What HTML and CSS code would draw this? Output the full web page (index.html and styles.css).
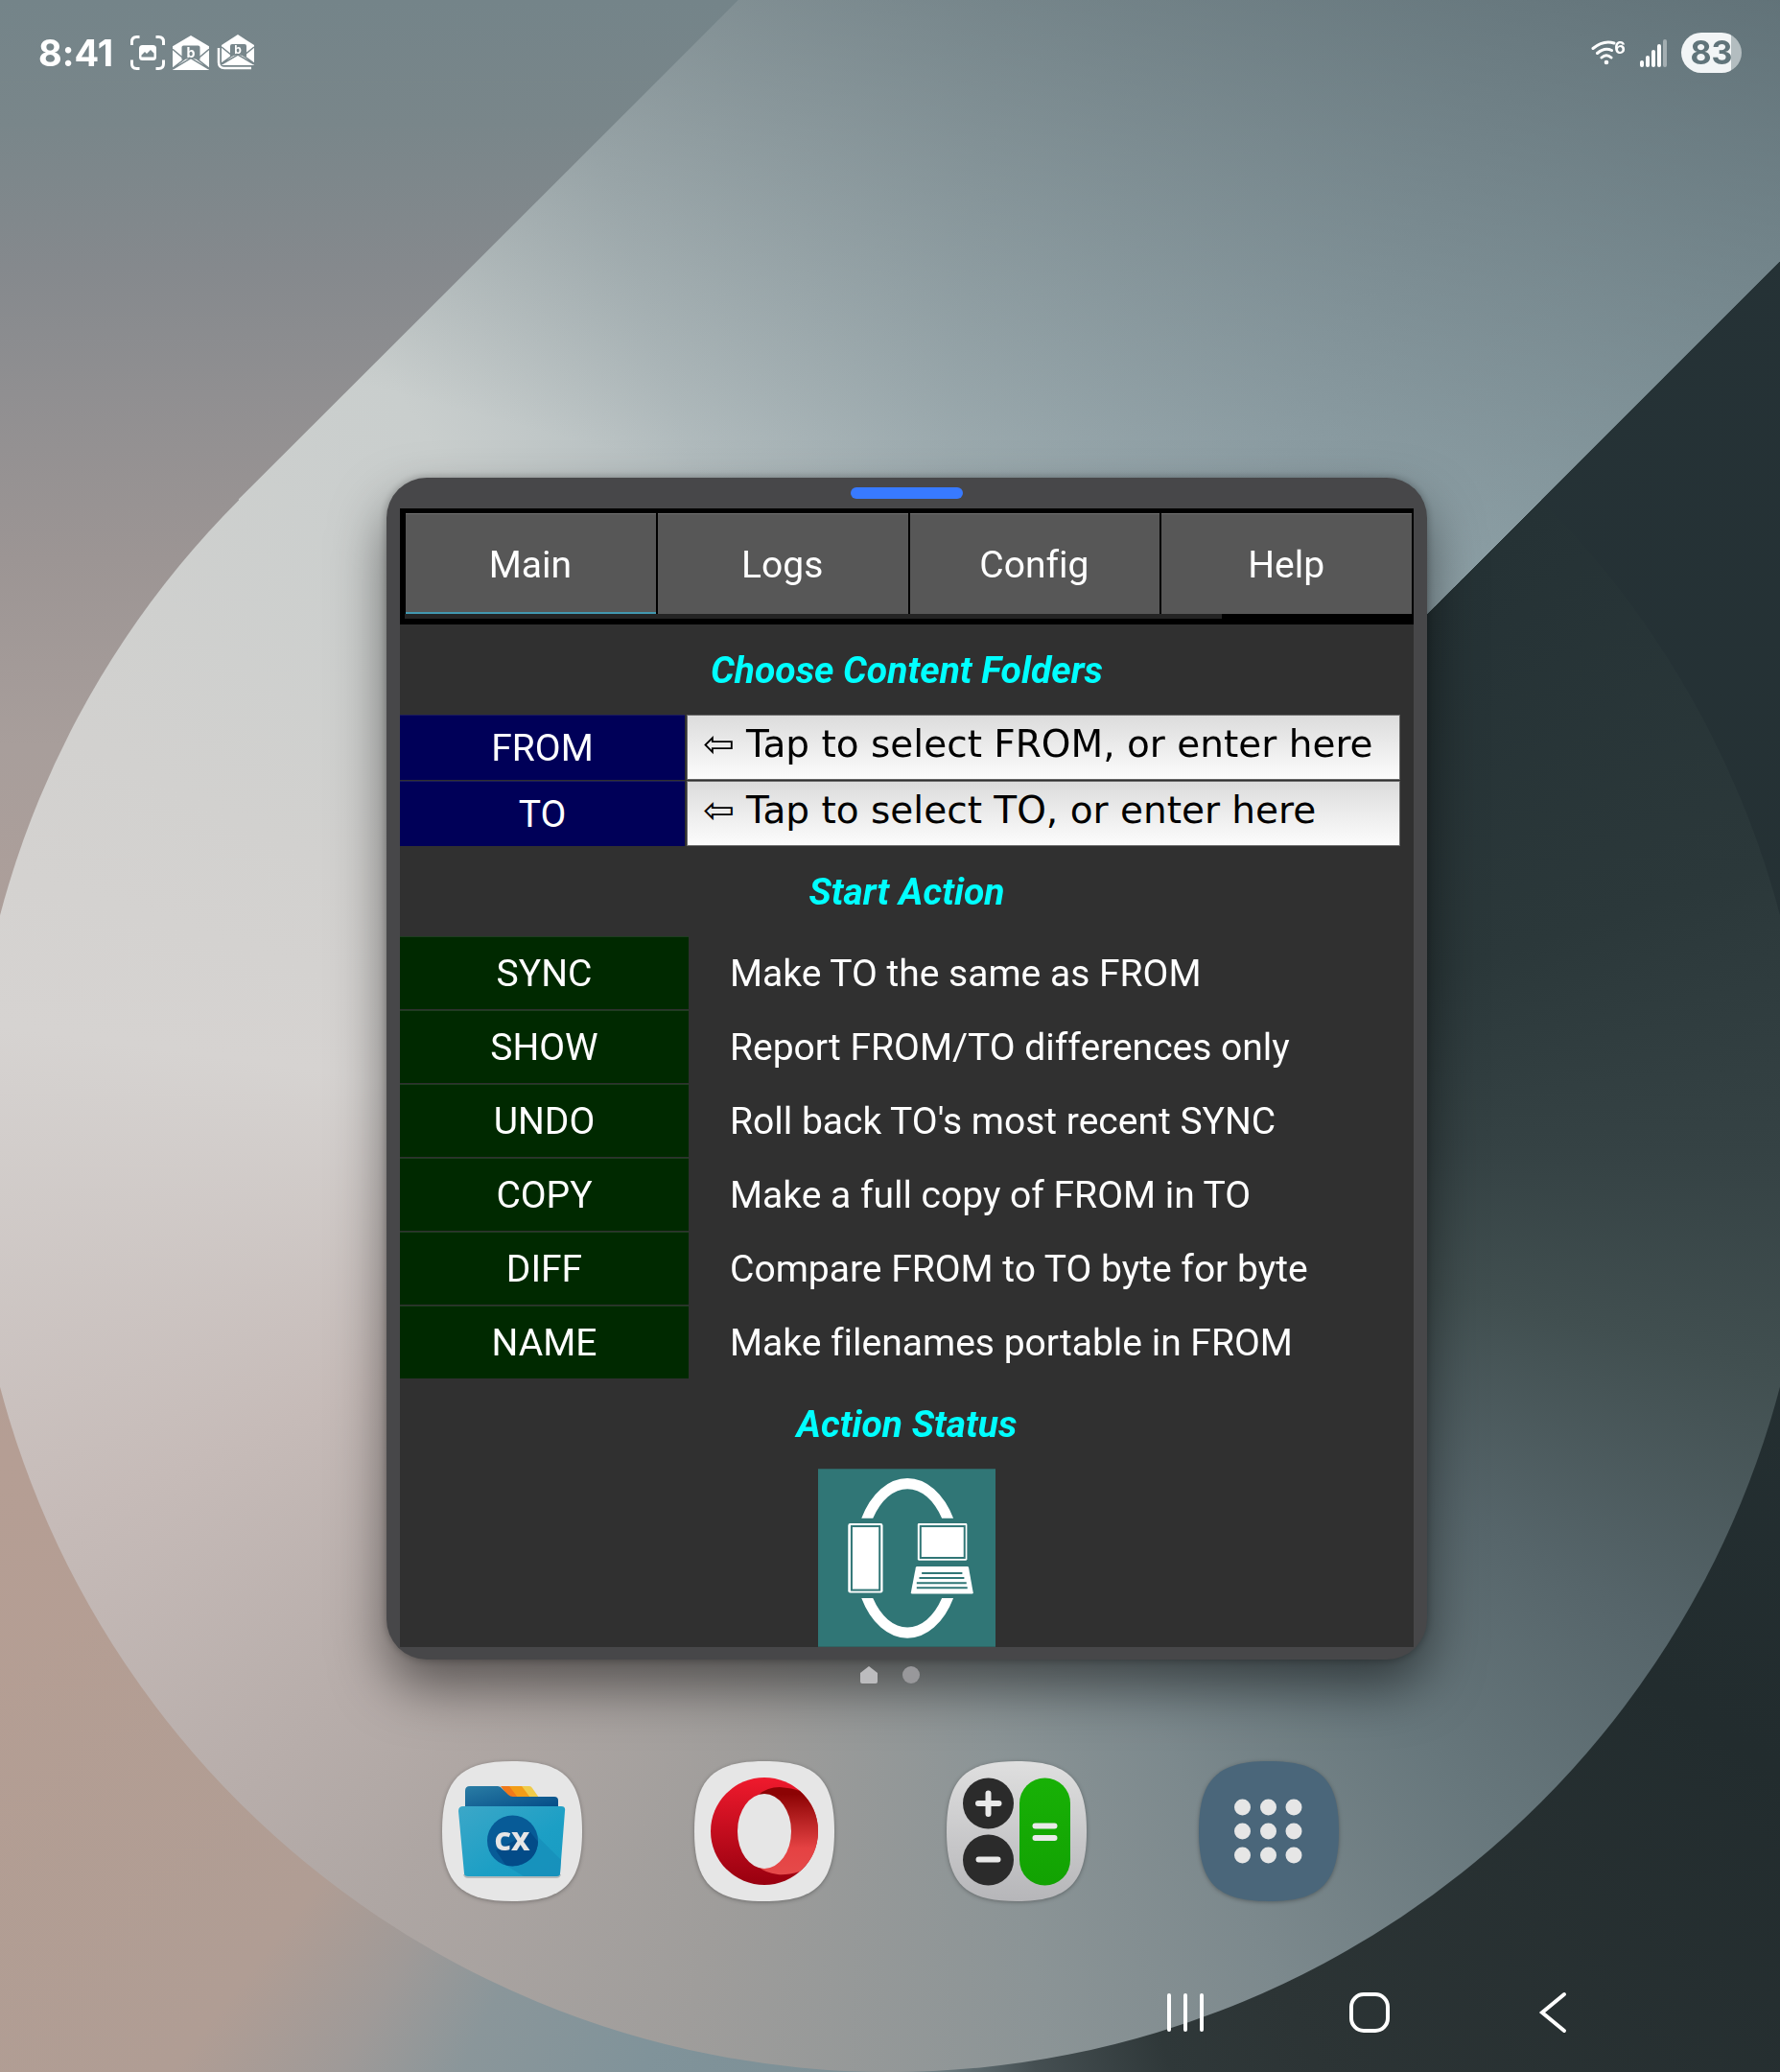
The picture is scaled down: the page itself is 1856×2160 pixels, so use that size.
FILE: index.html
```html
<!DOCTYPE html>
<html lang="en">
<head>
<meta charset="utf-8">
<meta name="viewport" content="width=device-width, initial-scale=1">
<title>Content sync</title>
<link rel="stylesheet" href="styles.css">
</head>
<body>
<div class="wallpaper" aria-hidden="true">
  <div class="disc"></div>
  <div class="beam"></div>
</div>
<div class="screen">
  <header class="status">
    <div class="status-group">
      <span class="clock">8:41</span>
      <span class="notices">
        <svg width="36" height="36" viewBox="0 0 36 36" fill="none"><path d="M1.500 10V6.500Q1.500 1.500 6.500 1.500H9.500M26.500 1.500H29.500Q34.500 1.500 34.500 6.500V10M34.500 25.500V29.500Q34.500 34.500 29.500 34.500H26.500M9.500 34.500H6.500Q1.500 34.500 1.500 29.500V25.500" stroke="#fff" stroke-width="3"/><rect x="9" y="10" width="18" height="16" rx="3.500" fill="#fff"/><path d="M11.500 22.500V20.500L15 17L17 19L21 15L24.500 18.500V22.500Z" fill="#78878c"/></svg>
        <svg width="38" height="38" viewBox="0 0 40 40"><path d="M20 1L40 13V39H0V13Z" fill="#fff"/><path d="M10 14Q10 12 12 12H28Q30 12 30 14V28L20 26L10 28Z" fill="#78878c"/><path d="M20 26L40 39H0Z" fill="#fff"/><path d="M0 16L13 27L0 37M40 16L27 27L40 37M0 38L20 26L40 38" stroke="#78878c" stroke-width="1.500" fill="none"/><text x="20" y="25" class="mail-mark">b</text></svg>
        <svg width="40" height="38" viewBox="0 0 40 38"><path d="M2 14V29Q2 35 8 35H36" stroke="#fff" stroke-width="2.500" fill="none"/><path d="M22 0L39 11V32H5V11Z" fill="#fff"/><path d="M14 12Q14 10 16 10H29Q31 10 31 12V23L22 21L14 23Z" fill="#78878c"/><path d="M22 21L39 32H5Z" fill="#fff"/><path d="M5 13L16 22L5 30M39 13L28 22L39 30M5 31L22 21L39 31" stroke="#78878c" stroke-width="1.500" fill="none"/><text x="22" y="20" class="mail-mark small">b</text></svg>
      </span>
    </div>
    <div class="status-group right">
      <svg width="36" height="30" viewBox="0 0 36 30" fill="none"><path d="M2 10.500Q13 1.500 24 5M6.500 15.500Q14 9 21.500 12.500M11 20Q16 15.500 21 20" stroke="#fff" stroke-width="3" stroke-linecap="round"/><circle cx="16" cy="25" r="2.300" fill="#fff"/><text x="30" y="16" class="wifi-mark">6</text></svg>
      <svg width="28" height="30" viewBox="0 0 28 30" fill="#fff"><rect y="23" width="4" height="7" rx="2"/><rect x="6" y="18" width="4" height="12" rx="2"/><rect x="12" y="12" width="4" height="18" rx="2"/><rect x="18" y="6" width="4" height="24" rx="2"/><rect x="24" y="1" width="4" height="29" rx="2" opacity=".4"/></svg>
      <span class="battery">83</span>
    </div>
  </header>

  <main class="desktop">
    <section class="window">
      <div class="handle"></div>
      <div class="app">
        <nav class="tabs">
          <button class="tab active">Main</button>
          <button class="tab">Logs</button>
          <button class="tab">Config</button>
          <button class="tab">Help</button>
        </nav>
        <div class="track"><div class="thumb"></div></div>
        <h2 class="title">Choose Content Folders</h2>
        <div class="folders">
          <button class="folder" id="from">FROM</button>
          <input class="path" aria-labelledby="from" value="⇦ Tap to select FROM, or enter here">
          <button class="folder" id="to">TO</button>
          <input class="path" aria-labelledby="to" value="⇦ Tap to select TO, or enter here">
        </div>
        <h2 class="title">Start Action</h2>
        <div class="actions">
          <button class="action">SYNC</button><span class="hint">Make TO the same as FROM</span>
          <button class="action">SHOW</button><span class="hint">Report FROM/TO differences only</span>
          <button class="action">UNDO</button><span class="hint">Roll back TO's most recent SYNC</span>
          <button class="action">COPY</button><span class="hint">Make a full copy of FROM in TO</span>
          <button class="action">DIFF</button><span class="hint">Compare FROM to TO byte for byte</span>
          <button class="action">NAME</button><span class="hint">Make filenames portable in FROM</span>
        </div>
        <h2 class="title">Action Status</h2>
        <svg class="logo" viewBox="0 0 556 558">
          <path fill="#307676" d="M0 0H556V558H0Z"/>
          <g fill="#fff">
            <path d="M136 155A166 250 0 0 1 424 155H388A132 216 0 0 0 172 155ZM136 405A166 250 0 0 0 424 405H388A132 216 0 0 1 172 405Z"/>
            <rect x="94" y="171" width="109" height="218" rx="7"/>
            <rect x="312" y="171" width="155" height="116" rx="4"/>
            <path d="M310 306H468Q471 306 472 310L486 388Q486 392 482 392H295Q291 392 291 388L306 310Q307 306 310 306Z"/>
          </g>
          <g fill="none" stroke="#307676" stroke-width="6">
            <rect x="105" y="180" width="88" height="200"/>
            <rect x="321" y="180" width="138" height="99"/>
            <path d="M325 327H452M317 342H458M309 358H465M309 373H468"/>
          </g>
        </svg>
      </div>
    </section>
    <div class="pages">
      <svg width="18" height="18" viewBox="0 0 18 18"><path d="M9 0L18 7V16Q18 18 16 18H2Q0 18 0 16V7Z" fill="#bcbcbe"/></svg>
      <svg width="18" height="18" viewBox="0 0 18 18"><circle cx="9" cy="9" r="9" fill="#98989b"/></svg>
    </div>
  </main>

  <footer class="bottom">
    <div class="dock">
      <button class="launcher" aria-label="File explorer">
        <svg viewBox="0 0 146 146">
          <defs>
            <linearGradient id="folder" x1="0" y1="0" x2="1" y2="1"><stop stop-color="#3ca7c8"/><stop offset=".6" stop-color="#1c9fc5"/><stop offset="1" stop-color="#189bc2"/></linearGradient>
            <linearGradient id="back" x1="0" y1="0" x2="1" y2="1"><stop stop-color="#2a7da5"/><stop offset="1" stop-color="#024a86"/></linearGradient>
          </defs>
          <path fill="#e6e6e6" d="M73 0C127 0 146 19 146 73S127 146 73 146 0 127 0 73 19 0 73 0Z"/>
          <path fill="#f0791a" d="M61 26H73L83 38H70Z"/><path fill="#f29d17" d="M70 26H85L93 38H79Z"/><path fill="#efcb4b" d="M83 26H91Q93 26 94 28L101 38H92Z"/>
          <path fill="url(#back)" d="M24 50V31Q24 26 29 26H58Q61 26 63 29L69 35Q71 37 74 37H117Q121 37 121 41V50Z"/>
          <path fill="#b4babc" d="M22 118H124Q123 122 119 122H27Q23 122 22 118Z"/>
          <path fill="url(#folder)" d="M22 47H124Q129 47 128 52L123 117Q123 120 119 120H27Q23 120 23 117L17 52Q17 47 22 47Z"/>
          <path fill="#168ab7" d="M56 102L85 120H119Q123 120 123 117L124 103L97 76Z" opacity=".6"/>
          <circle cx="73.500" cy="83" r="26.500" fill="#075b97"/>
          <path fill="#034b88" d="M56 93L66 108Q74 111 84 107Q99 101 100 84L92 74Z"/>
          <text x="73" y="93" class="cx-mark">CX</text>
        </svg>
      </button>
      <button class="launcher" aria-label="Browser">
        <svg viewBox="0 0 146 146">
          <defs>
            <linearGradient id="ring" x1="0" y1="0" x2="0" y2="1"><stop stop-color="#ef1a2d"/><stop offset="1" stop-color="#98000f"/></linearGradient>
            <linearGradient id="fold" x1="0" y1="0" x2="0" y2="1"><stop offset=".08" stop-color="#8c0304"/><stop offset=".7" stop-color="#e54243"/><stop offset="1" stop-color="#e54a4a"/></linearGradient>
          </defs>
          <path fill="#e6e6e6" d="M73 0C127 0 146 19 146 73S127 146 73 146 0 127 0 73 19 0 73 0Z"/>
          <circle cx="73" cy="73" r="56" fill="url(#ring)"/>
          <path fill="url(#fold)" d="M67 35Q76 27 89 27Q102 28 110 31Q129 48 129 73T110 115Q96 119 87 118Q73 116 67 110Z"/>
          <ellipse cx="73" cy="73" rx="28" ry="39" fill="#e6e6e6"/>
        </svg>
      </button>
      <button class="launcher" aria-label="Calculator">
        <svg viewBox="0 0 146 146">
          <defs>
            <linearGradient id="plate" x1="0" y1="0" x2="0" y2="1"><stop stop-color="#dfdfdf"/><stop offset="1" stop-color="#b6b6b9"/></linearGradient>
            <linearGradient id="equals" x1="0" y1="0" x2="0" y2="1"><stop stop-color="#18b106"/><stop offset="1" stop-color="#12a202"/></linearGradient>
          </defs>
          <path fill="url(#plate)" d="M73 0C127 0 146 19 146 73S127 146 73 146 0 127 0 73 19 0 73 0Z"/>
          <circle cx="43.500" cy="44" r="26.500" fill="#2b2b2b"/><circle cx="43.500" cy="103" r="26.500" fill="#2b2b2b"/>
          <rect x="76" y="17.500" width="53" height="112" rx="26.500" fill="url(#equals)"/>
          <path d="M33 44H54.500M43.500 33.500V55M33.500 102.500H53.500M92.500 67.500H112.500M92.500 80H112.500" stroke="#e9e9e9" stroke-width="6" stroke-linecap="round"/>
        </svg>
      </button>
      <button class="launcher" aria-label="All apps">
        <svg viewBox="0 0 146 146">
          <path fill="#4a667a" d="M73 0C127 0 146 19 146 73S127 146 73 146 0 127 0 73 19 0 73 0Z"/>
          <g fill="#e6e6e6"><circle cx="45.500" cy="48" r="8.500"/><circle cx="72.500" cy="48" r="8.500"/><circle cx="99" cy="48" r="8.500"/><circle cx="45.500" cy="73" r="8.500"/><circle cx="72.500" cy="73" r="8.500"/><circle cx="99" cy="73" r="8.500"/><circle cx="45.500" cy="98" r="8.500"/><circle cx="72.500" cy="98" r="8.500"/><circle cx="99" cy="98" r="8.500"/></g>
        </svg>
      </button>
    </div>
    <nav class="system">
      <button class="key" aria-label="Recents"><svg viewBox="0 0 44 44"><path d="M5 4V40M22 4V40M39 4V40" stroke="#fff" stroke-width="4" stroke-linecap="round"/></svg></button>
      <button class="key" aria-label="Home"><svg viewBox="0 0 44 44"><rect x="3" y="3" width="38" height="38" rx="13" fill="none" stroke="#fff" stroke-width="4"/></svg></button>
      <button class="key" aria-label="Back"><svg viewBox="0 0 44 44"><path d="M33 3L10 22L33 41" fill="none" stroke="#fff" stroke-width="4" stroke-linecap="round"/></svg></button>
    </nav>
  </footer>
</div>
</body>
</html>
```
FILE: styles.css
```css
* { box-sizing: border-box; }

body {
  margin: 0;
  font-family: Roboto, "Liberation Sans", sans-serif;
  font-variant-ligatures: none;
  color: #fff;
}

button {
  margin: 0;
  padding: 0;
  border: 0;
  background: none;
  color: inherit;
  font: inherit;
}

svg { display: block; }

/* Wallpaper: a disc and a diagonal beam that share one sweep of colour */
.wallpaper {
  --sweep: #253235 0deg, #2b383a 27deg, #354244 45deg, #414f50 59deg, #56656a 77deg,
    #67777c 93deg, #7c898d 110deg, #8b9496 125deg, #9f9d9b 148deg, #aea6a3 169deg,
    #b7adaa 180deg, #c6bbb8 201deg, #d6d3d1 233deg, #d2d1cf 252deg, #c9cecd 282deg,
    #b3bdbf 299deg, #a3b1b5 320deg, #98a9af 345deg, #93a6ac 360deg;
  position: fixed;
  inset: 0;
  z-index: -1;
  overflow: hidden;
  background:
    conic-gradient(from 0deg at 50% 55.6%,
      rgba(116, 132, 137, 0) 0deg, rgba(116, 132, 137, 0) 30deg, #253236 30deg,
      #253134 90deg, #222c2e 125deg, #2c3435 155deg,
      #2f3839 163deg, #454f52 171deg, #7c8f95 180deg, #80939a 195deg, #8a969a 205deg,
      #9f9a98 211deg, #b09d94 218deg, rgba(179, 158, 148, 0) 240deg),
    linear-gradient(#748489 0%, #79868a 6%, #85898d 13%, #908f91 19%,
      #9c9594 27%, #a89e9b 36%, #b09f99 50%, #b59e94 70%, #b39e93 100%);
}

.disc {
  position: absolute;
  left: calc(50% - 960 / 1856 * 100%);
  top: 11.1%;
  width: calc(1920 / 1856 * 100%);
  aspect-ratio: 1;
  border-radius: 50%;
  background: conic-gradient(from 45deg, var(--sweep));
}

.beam {
  position: absolute;
  inset: 0;
  clip-path: polygon(41.5% 0, 100% 0, 100% 12.6%, 50% 55.6%, 13.4% 24.1%);
  background:
    linear-gradient(15deg, rgba(80, 97, 103, 0) 70%, rgba(80, 97, 103, .75) 100%),
    conic-gradient(from 45deg at 50% 55.6%, var(--sweep));
}

.screen {
  display: flex;
  flex-direction: column;
  min-height: 100vh;
}

/* Status bar */
.status {
  display: flex;
  justify-content: space-between;
  align-items: center;
  height: 110px;
  padding: 0 40px;
}

.status-group,
.notices {
  display: flex;
  align-items: center;
}

.status-group { gap: 18px; }
.status-group.right { gap: 15px; }
.notices { gap: 8px; }

.clock,
.battery {
  font-family: Inter, sans-serif;
  font-size: 38px;
  font-weight: 700;
}

.battery {
  width: 63px;
  height: 42px;
  border-radius: 21px;
  background: linear-gradient(90deg, #f2f5f6 52px, #b3bdc0 52px);
  color: #60747a;
  font-size: 34px;
  line-height: 42px;
  text-align: center;
}

.mail-mark {
  fill: #fff;
  font: 700 15px Inter, sans-serif;
  text-anchor: middle;
}

.mail-mark.small { font-size: 12px; }

.wifi-mark {
  fill: #fff;
  font: 700 18px Inter, sans-serif;
  text-anchor: middle;
}

.cx-mark {
  fill: #e6e6e6;
  font: 800 27px "Open Sans", sans-serif;
  text-anchor: middle;
}

/* App window */
.desktop {
  flex: 1;
  padding: 388px 368px 0 403px;
}

.window {
  padding: 10px 14px 13px;
  border-radius: 42px;
  background: #474749;
  box-shadow: 0 28px 56px rgba(0, 0, 0, .5), 0 0 8px rgba(0, 0, 0, .3);
}

.handle {
  width: 117px;
  height: 12px;
  margin: 0 auto 10px;
  border-radius: 6px;
  background: #387aff;
}

.app {
  background: #303030;
  font-size: 39px;
}

.tabs {
  display: grid;
  grid-template-columns: repeat(4, 1fr);
  gap: 2px;
  padding: 5px 2px 0 6px;
  background: #000;
}

.tab {
  height: 105px;
  padding-top: 1px;
  padding-right: 1px;
  border-top: 1px solid #707070;
  background: #575757;
}

.tab.active { box-shadow: inset 0 -2px #4398b0; }

.track {
  height: 11px;
  padding: 0 0 6px 5px;
  background: #000;
}

.thumb {
  width: 81%;
  height: 5px;
  background: #242424;
}

.title {
  height: 94px;
  margin: 0;
  color: #0ff;
  font-size: 39px;
  font-style: italic;
  font-weight: 700;
  line-height: 96px;
  text-align: center;
}

.folders {
  display: grid;
  grid-template-columns: 297px 1fr;
  gap: 1px 2px;
  padding-right: 14px;
}

.folder,
.path { height: 68px; }

.folder {
  border-top: 1px solid #1c1c5c;
  background: #000058;
}

.path {
  width: 100%;
  min-width: 0;
  padding: 0 16px 8px;
  border: 1px solid #6a6a6a;
  border-radius: 0;
  background: linear-gradient(#dcdcdc, #fcfcfc);
  color: #000;
  font-family: "DejaVu Sans", sans-serif;
  font-size: 39px;
}

.actions {
  display: grid;
  grid-template-columns: 301px 1fr;
  align-items: center;
  gap: 1px 43px;
}

.action {
  height: 76px;
  padding-top: 1px;
  border-top: 1px solid #1f3d20;
  background: #002900;
}

.hint { padding-top: 1px; }

.logo {
  width: 185px;
  height: 186px;
  margin: 0 auto;
}

.pages {
  display: flex;
  justify-content: center;
  gap: 26px;
  padding: 7px 35px 0 0;
}

/* Dock and system keys */
.dock {
  display: flex;
  justify-content: center;
  gap: 117px;
}

.launcher,
.launcher svg {
  width: 146px;
  height: 146px;
}

.launcher { filter: drop-shadow(0 1px 2px rgba(0, 0, 0, .3)); }

.system {
  display: flex;
  justify-content: flex-end;
  gap: 148px;
  padding: 94px 214px 40px 0;
}

.key,
.key svg {
  width: 44px;
  height: 44px;
}
```
